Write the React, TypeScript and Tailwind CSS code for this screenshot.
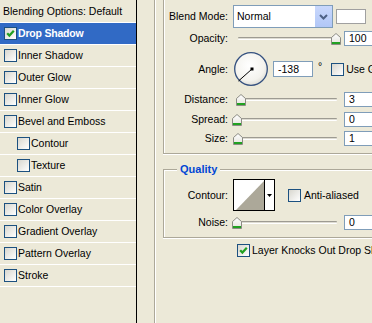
import React from "react";

function Check({ checked }: { checked?: boolean }) {
  return (
    <span className="w-[13px] h-[13px] shrink-0 border border-[#1c5180] bg-linear-to-br from-[#d8d7cf] to-white flex items-center justify-center">
      {checked && (
        <svg width="9" height="9" viewBox="0 0 9 9">
          <path d="M1.2 4.2 L3.4 6.6 L7.8 1.8" stroke="#21a121" strokeWidth="2.2" fill="none" />
        </svg>
      )}
    </span>
  );
}

function Thumb() {
  return (
    <svg width="10" height="12" viewBox="0 0 10 12">
      <defs>
        <linearGradient id="tg" x1="0" y1="0" x2="0" y2="1">
          <stop offset="0" stopColor="#ffffff" />
          <stop offset="1" stopColor="#e4e3dc" />
        </linearGradient>
      </defs>
      <path d="M0.5 4.5 L5 0.5 L9.5 4.5 L9.5 11.5 L0.5 11.5 Z" fill="url(#tg)" stroke="#8c8c84" />
      <rect x="1" y="9" width="8" height="2" fill="#21a121" />
    </svg>
  );
}

function Slider({ pos }: { pos: number }) {
  return (
    <div className="relative ml-[5px] w-[105px] h-full flex items-center shrink-0">
      <div className="ml-[5px] w-[99px] h-[3px] rounded-[1px] border-t border-[#9d9b92] border-b border-b-white bg-[#dedcd2]" />
      <div className="absolute top-[2px]" style={{ left: pos }}>
        <Thumb />
      </div>
    </div>
  );
}

function Field({ value, w = 40, ml = 7, h = 15 }: { value: string; w?: number; ml?: number; h?: number }) {
  return (
    <div
      className="shrink-0 border border-[#7f9db9] bg-white flex items-center pl-[4px] leading-[13px]"
      style={{ width: w, marginLeft: ml, height: h }}
    >
      {value}
    </div>
  );
}

function Label({ children }: { children: React.ReactNode }) {
  return <div className="w-[64px] shrink-0 text-right whitespace-nowrap">{children}</div>;
}

const items: { label: string; checked?: boolean; selected?: boolean; indent?: boolean }[] = [
  { label: "Drop Shadow", checked: true, selected: true },
  { label: "Inner Shadow" },
  { label: "Outer Glow" },
  { label: "Inner Glow" },
  { label: "Bevel and Emboss" },
  { label: "Contour", indent: true },
  { label: "Texture", indent: true },
  { label: "Satin" },
  { label: "Color Overlay" },
  { label: "Gradient Overlay" },
  { label: "Pattern Overlay" },
  { label: "Stroke" },
];

export default function App() {
  return (
    <div className="w-[372px] h-[323px] overflow-hidden flex bg-[#ece9d8] text-black text-[10.5px] leading-[13px] font-['Liberation_Sans',Arial,sans-serif]">
      {/* left list */}
      <div className="w-[137px] shrink-0 h-full border-r border-black flex flex-col">
        <div className="h-[22px] pl-[3px] flex items-center whitespace-nowrap">Blending Options: Default</div>
        {items.map((it) => (
          <div key={it.label} className="h-[22px] border-t border-white flex">
            <div
              className={
                "flex-1 flex items-center whitespace-nowrap " +
                (it.indent ? "pl-[17px] " : "pl-[4px] ") +
                (it.selected ? "bg-[#316ac5] text-white font-bold tracking-[-0.2px]" : "")
              }
            >
              <Check checked={it.checked} />
              <span className="ml-[1px]">{it.label}</span>
            </div>
          </div>
        ))}
        <div className="border-t border-white" />
      </div>

      {/* right panel */}
      <div className="flex-1 min-w-0 h-full pl-[17px]">
        <div className="h-full border-l border-[#aca899] shadow-[inset_1px_0_0_#fff] pl-[8px]">
          {/* structure box */}
          <div className="w-[240px] border-l border-b border-[#aca899] shadow-[inset_1px_0_0_#fff,0_1px_0_#fff] flex flex-col pb-[7px]">
            <div className="mt-[5px] h-[23px] flex items-center">
              <Label>Blend Mode:</Label>
              <div className="ml-[5px] w-[100px] h-[23px] shrink-0 border border-[#7f9db9] bg-white flex">
                <div className="flex-1 pl-[3px] flex items-center">Normal</div>
                <div className="w-[17px] h-full bg-linear-to-b from-[#c9d8fc] to-[#b1c7f7] flex items-center justify-center">
                  <svg width="9" height="6" viewBox="0 0 9 6">
                    <path d="M1 1 L4.5 4.5 L8 1" stroke="#4d6185" strokeWidth="2" fill="none" />
                  </svg>
                </div>
              </div>
              <div className="ml-[3px] w-[30px] h-[15px] shrink-0 border border-[#a0a0a0] bg-white" />
            </div>

            <div className="mt-[3px] h-[15px] flex items-center">
              <Label>Opacity:</Label>
              <Slider pos={98} />
              <Field value="100" ml={6} />
            </div>

            <div className="mt-[6px] h-[34px] flex items-center">
              <Label>Angle:</Label>
              <svg className="ml-[6px] shrink-0" width="34" height="34" viewBox="0 0 34 34">
                <defs>
                  <radialGradient id="ag" cx="0.45" cy="0.4" r="0.65">
                    <stop offset="0" stopColor="#ffffff" />
                    <stop offset="0.7" stopColor="#f4f3ee" />
                    <stop offset="1" stopColor="#d9d8d0" />
                  </radialGradient>
                </defs>
                <circle cx="17" cy="17" r="16.3" fill="url(#ag)" stroke="#34507f" strokeWidth="1.3" />
                <line x1="18" y1="17" x2="4.5" y2="29" stroke="#000" strokeWidth="1" />
                <rect x="16.5" y="15.5" width="3" height="3" fill="#000" />
              </svg>
              <Field value="-138" ml={5} h={16} />
              <span className="ml-[5px] self-start mt-[8px]">°</span>
              <div className="ml-[9px]">
                <Check />
              </div>
              <span className="ml-[2px] whitespace-nowrap">Use Global Light</span>
            </div>

            <div className="mt-[6px] h-[15px] flex items-center">
              <Label>Distance:</Label>
              <Slider pos={3} />
              <Field value="3" ml={6} />
            </div>

            <div className="mt-[5px] h-[15px] flex items-center">
              <Label>Spread:</Label>
              <Slider pos={-1} />
              <Field value="0" ml={6} />
            </div>

            <div className="mt-[4px] h-[15px] flex items-center">
              <Label>Size:</Label>
              <Slider pos={0} />
              <Field value="1" ml={6} />
            </div>
          </div>

          {/* quality box */}
          <div className="relative mt-[15px] w-[240px] border border-[#aca899] shadow-[inset_1px_1px_0_#fff,0_1px_0_#fff] flex flex-col pb-[7px]">
            <div className="absolute left-[13px] top-[-7px] px-[3px] bg-[#ece9d8] text-[#0046d5] font-bold text-[11px]">Quality</div>
            <div className="mt-[9px] h-[32px] flex items-center">
              <Label>Contour:</Label>
              <div className="ml-[5px] w-[42px] h-[32px] shrink-0 border border-black flex">
                <svg width="30" height="30" viewBox="0 0 30 30" className="bg-white">
                  <polygon points="2,30 30,1 30,30" fill="#aca899" />
                </svg>
                <div className="flex-1 border-l border-black bg-white flex items-center justify-center">
                  <svg width="5" height="3" viewBox="0 0 5 3">
                    <polygon points="0,0 5,0 2.5,3" fill="#000" />
                  </svg>
                </div>
              </div>
              <div className="ml-[13px]">
                <Check />
              </div>
              <span className="ml-[3px] whitespace-nowrap">Anti-aliased</span>
            </div>
            <div className="mt-[4px] h-[15px] flex items-center">
              <Label>Noise:</Label>
              <Slider pos={-1} />
              <Field value="0" ml={6} />
            </div>
          </div>

          <div className="mt-[6px] h-[13px] flex items-center pl-[74px]">
            <Check checked />
            <span className="ml-[2px] whitespace-nowrap">Layer Knocks Out Drop Shadow</span>
          </div>
        </div>
      </div>
    </div>
  );
}
